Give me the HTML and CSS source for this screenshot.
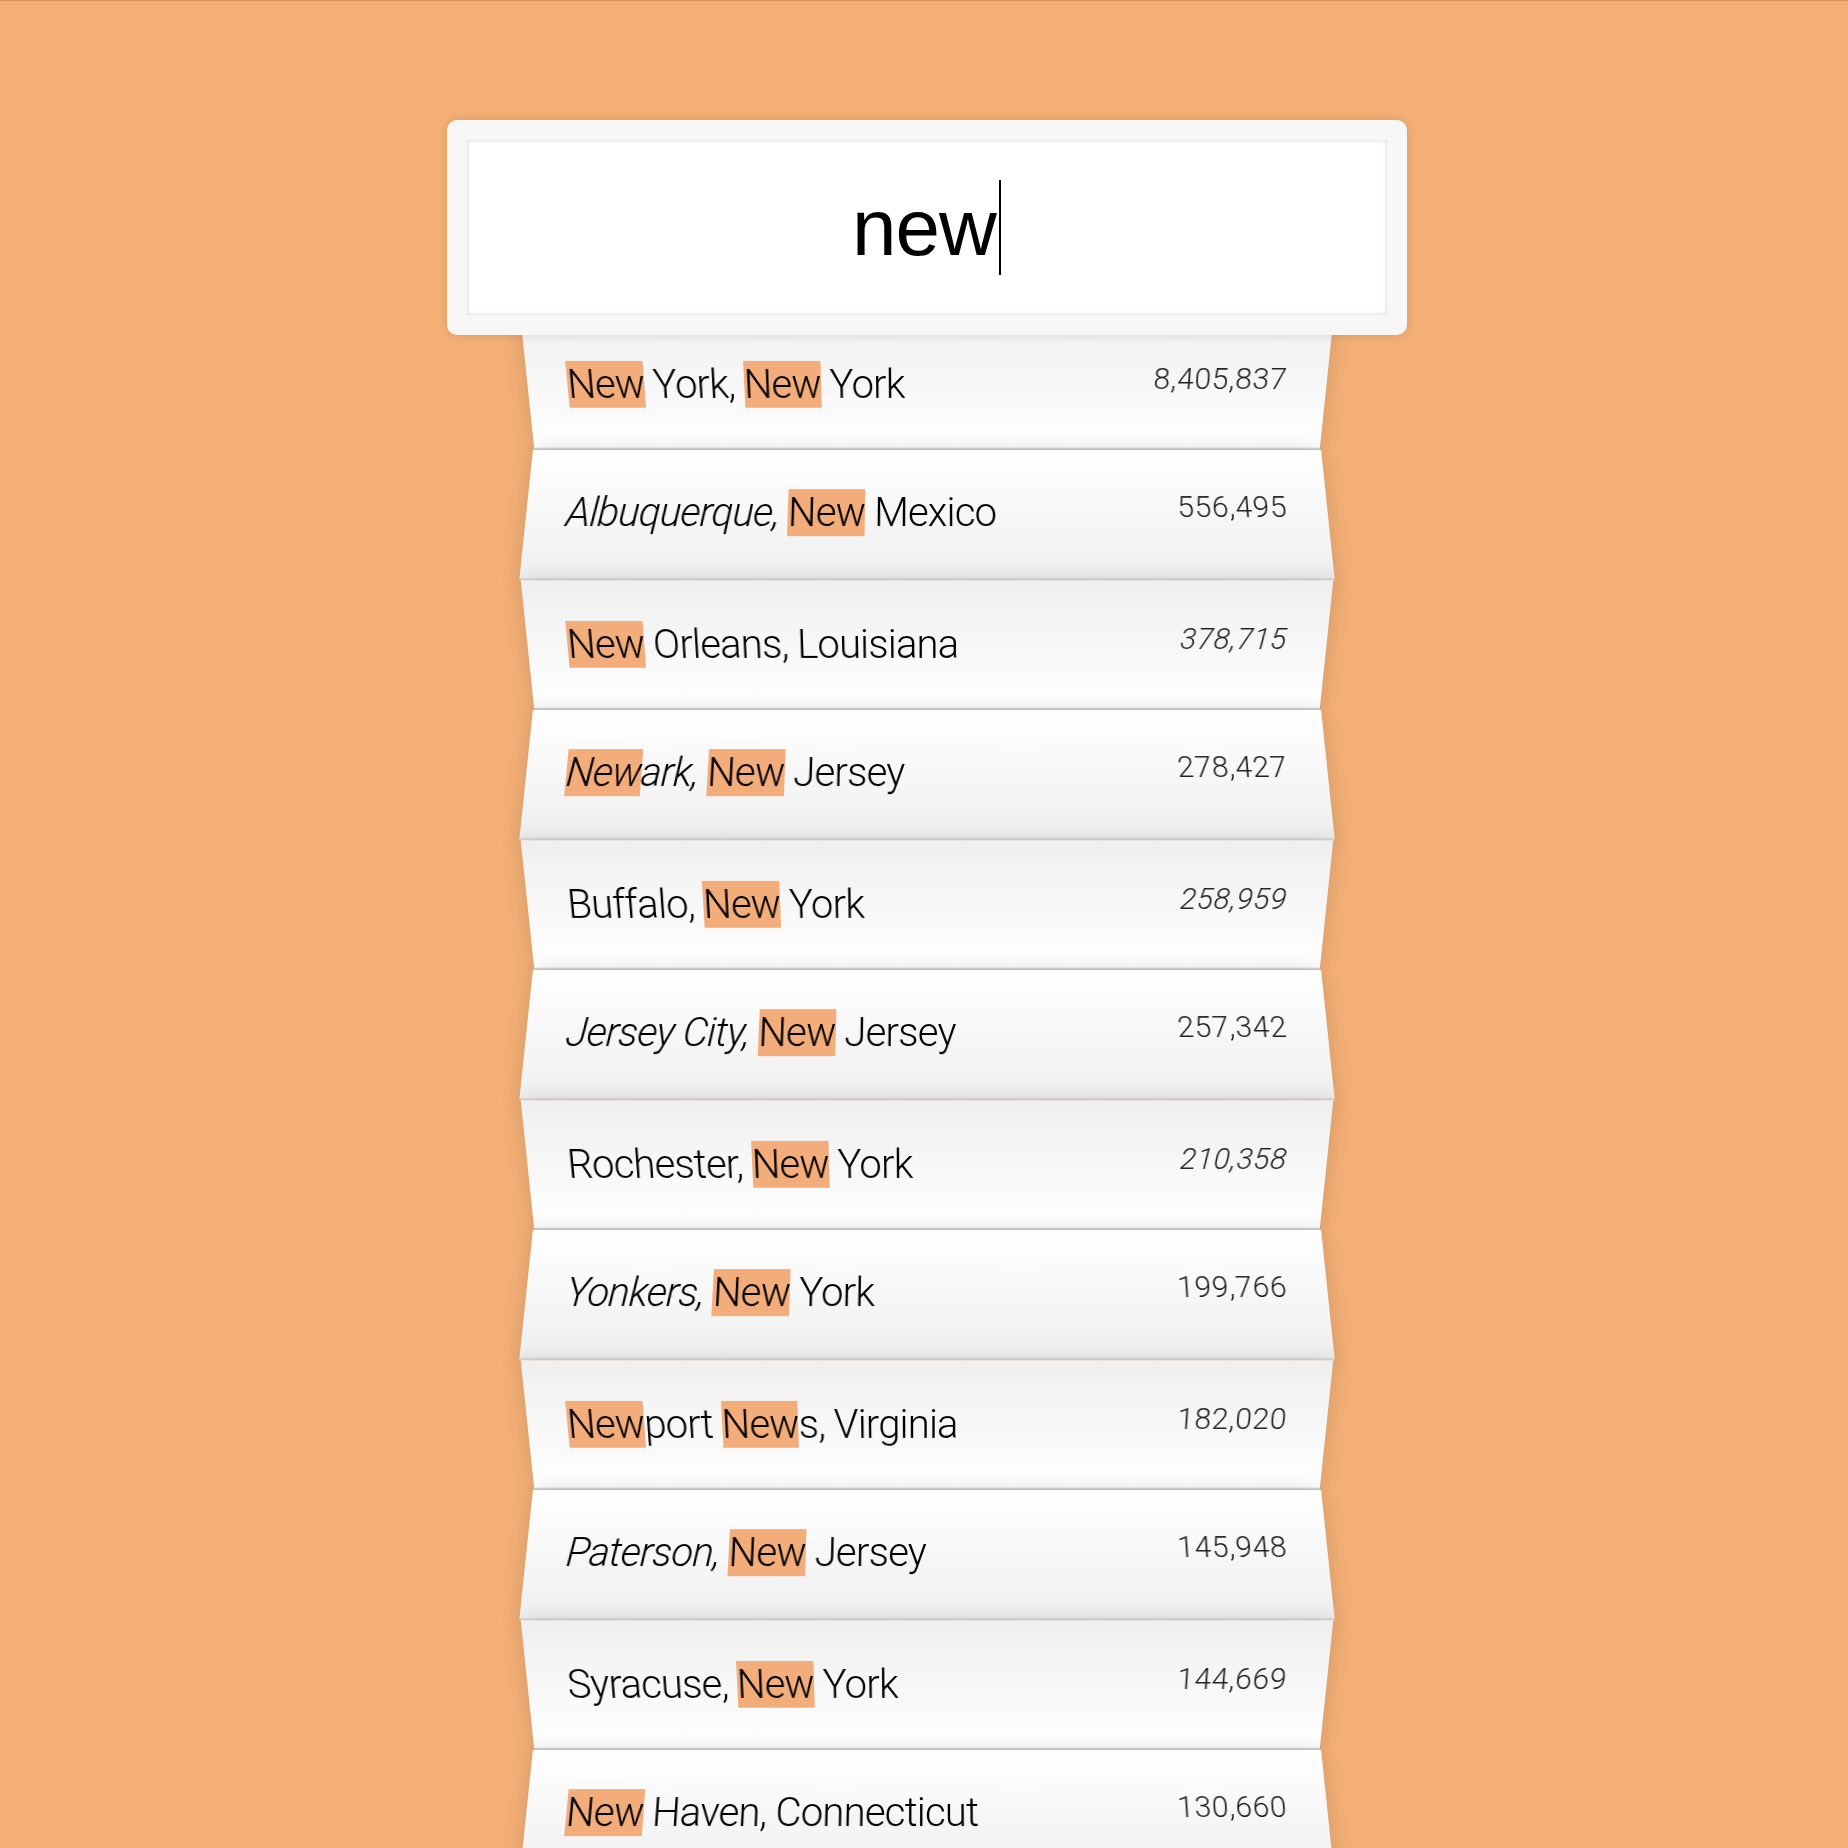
FILE: index.html
```html
<!DOCTYPE html>
<html lang="en">
<head>
<meta charset="utf-8">
<title>Type Ahead</title>
<link rel="stylesheet" href="styles.css">
</head>
<body>
<form class="search-form">
  <div class="search" role="searchbox"><span class="query">new</span><span class="caret"></span></div>
  <ul class="suggestions">
    <li><span class="name"><span class="hl">New</span> York, <span class="hl">New</span> York</span><span class="population">8,405,837</span></li>
    <li><span class="name"><em>Albuquerque,</em> <span class="hl">New</span> Mexico</span><span class="population">556,495</span></li>
    <li><span class="name"><span class="hl">New</span> Orleans, Louisiana</span><span class="population"><em>378,715</em></span></li>
    <li><span class="name"><em><span class="hl">New</span>ark,</em> <span class="hl">New</span> Jersey</span><span class="population">278,427</span></li>
    <li><span class="name">Buffalo, <span class="hl">New</span> York</span><span class="population"><em>258,959</em></span></li>
    <li><span class="name"><em>Jersey City,</em> <span class="hl">New</span> Jersey</span><span class="population">257,342</span></li>
    <li><span class="name">Rochester, <span class="hl">New</span> York</span><span class="population"><em>210,358</em></span></li>
    <li><span class="name"><em>Yonkers,</em> <span class="hl">New</span> York</span><span class="population">199,766</span></li>
    <li><span class="name"><span class="hl">New</span>port <span class="hl">New</span>s, Virginia</span><span class="population">182,020</span></li>
    <li><span class="name"><em>Paterson,</em> <span class="hl">New</span> Jersey</span><span class="population">145,948</span></li>
    <li><span class="name">Syracuse, <span class="hl">New</span> York</span><span class="population">144,669</span></li>
    <li><span class="name"><span class="hl">New</span> Haven, Connecticut</span><span class="population">130,660</span></li>
  </ul>
</form>
</body>
</html>
```

FILE: styles.css
```css
html {
  box-sizing: border-box;
  background: #f3af75;
  border-top: 1px solid #d6955e;
  font-family: Roboto, "Liberation Sans", sans-serif;
  font-size: 40px;
  font-weight: 300;
}

*, *::before, *::after {
  box-sizing: inherit;
}

body {
  margin: 0 8px 8px 13px;
}

.search-form {
  max-width: 800px;
  margin: 99px auto 100px;
}

.search {
  position: relative;
  z-index: 2;
  top: 20px;
  left: -10%;
  width: 120%;
  display: flex;
  justify-content: center;
  padding: 40px;
  background: #fff;
  border: 20px solid #f7f7f7;
  border-radius: 10px;
  box-shadow: 0 0 10px rgba(0, 0, 0, 0.12), inset 0 0 4px rgba(0, 0, 0, 0.19);
  font-family: "Liberation Sans", Arial, sans-serif;
  font-weight: 400;
  font-size: 80px;
  line-height: 95px;
  color: #000;
}

.query {
  letter-spacing: -1px;
}

.caret {
  width: 2px;
  margin-left: 3px;
  background: #000;
}

.suggestions {
  margin: 0;
  padding: 0;
  position: relative;
}

.suggestions li {
  list-style: none;
  border-bottom: 2px solid #d8d8d8;
  box-shadow: 0 0 20px rgba(0, 0, 0, 0.14);
  margin: 0;
  padding: 40px;
  display: flex;
  justify-content: space-between;
  line-height: 48px;
  color: #000;
}

.name {
  letter-spacing: -0.8px;
}

.suggestions li:nth-child(even) {
  transform: perspective(200px) rotateX(3deg) translateY(4px) scale(1.001);
  background: linear-gradient(to bottom, #ffffff 0%, #efefef 100%);
}

.suggestions li:nth-child(odd) {
  transform: perspective(200px) rotateX(-3deg) translateY(6px);
  background: linear-gradient(to top, #ffffff 0%, #efefef 100%);
}

.population {
  font-size: 30px;
  line-height: 36px;
  letter-spacing: 0.6px;
  color: #222;
}

.hl {
  background: #f2ad7b;
}
```
